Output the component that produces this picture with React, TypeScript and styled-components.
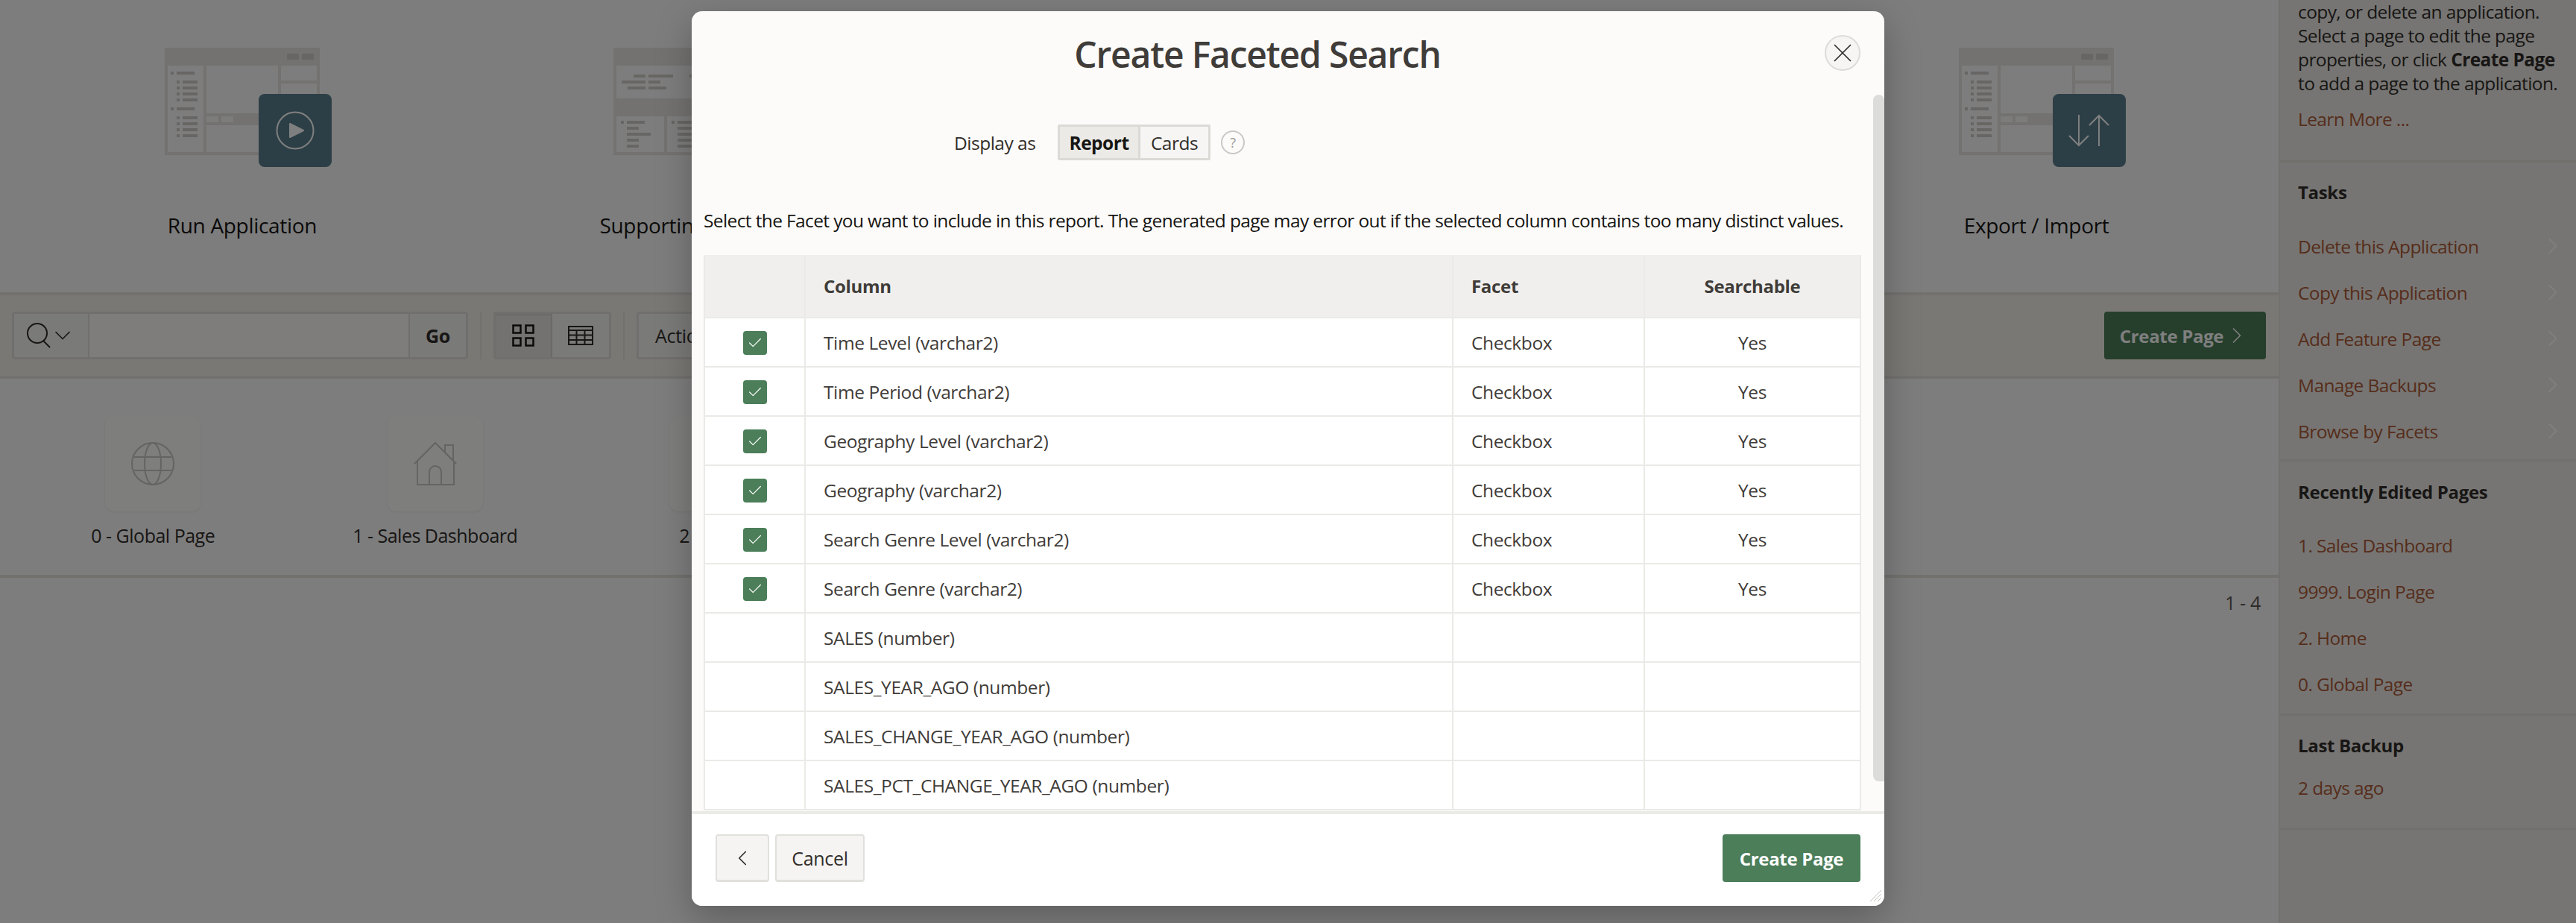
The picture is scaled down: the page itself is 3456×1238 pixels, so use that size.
import React from "react";
import styled, { createGlobalStyle } from "styled-components";
import { ChevronRight, ChevronLeft, ChevronDown, X, Check } from "lucide-react";

const FONT = `"Open Sans", "Noto Sans", sans-serif`;

const GlobalStyle = createGlobalStyle`
  html, body {
    margin: 0;
    height: 100%;
    overflow: hidden;
    background: #fbfbfb;
  }
  body {
    font-family: ${FONT};
    letter-spacing: -0.32px;
    color: #161513;
  }
  * { box-sizing: border-box; }
`;

const Page = styled.div`
  position: relative;
  display: flex;
  width: 3456px;
  height: 1238px;
  overflow: hidden;
  background: #fbfbfb;
`;

const Main = styled.main`
  width: 3057px;
  flex: none;
`;

const Hero = styled.section`
  display: grid;
  grid-template-columns: repeat(5, 1fr);
  height: 396px;
  padding: 64px 24px 0;
  border-bottom: 4px solid #e4e2dd;
`;

const HeroTile = styled.div`
  display: flex;
  flex-direction: column;
  align-items: center;
`;

const HeroArt = styled.div`
  position: relative;
  width: 208px;
  height: 160px;
`;

const HeroBadge = styled.div`
  position: absolute;
  left: 126px;
  top: 62px;
  width: 98px;
  height: 98px;
  display: flex;
  align-items: center;
  justify-content: center;
  border-radius: 8px;
  background: #5a7f8d;
`;

const HeroLabel = styled.div`
  margin-top: 58px;
  font-size: 28px;
  line-height: 40px;
  white-space: nowrap;
`;

const Toolbar = styled.div`
  display: flex;
  align-items: center;
  gap: 16px;
  height: 112px;
  padding: 0 16px;
  background: #f2f0ea;
  border-bottom: 4px solid #e4e2dd;
`;

const Group = styled.div`
  display: flex;
  height: 64px;
  border: 3px solid #e0deda;
  border-radius: 4px;
  background: #f5f4f0;
`;

const SearchMenu = styled.div`
  width: 101px;
  display: flex;
  align-items: center;
  padding-left: 17px;
  border-right: 2px solid #e0deda;
`;

const SearchInput = styled.div`
  width: 428px;
  background: #fcfbf9;
`;

const GoButton = styled.div`
  width: 77px;
  display: flex;
  align-items: center;
  justify-content: center;
  border-left: 2px solid #e0deda;
  font-size: 25px;
  font-weight: 700;
  color: #312d2a;
`;

const Divider = styled.span`
  width: 2px;
  height: 64px;
  background: #e4e2dd;
`;

const ViewToggle = styled.div<{ $active?: boolean }>`
  width: 76px;
  display: flex;
  align-items: center;
  justify-content: center;
  background: ${(p) => (p.$active ? "#e7e5e1" : "transparent")};
  border-right: ${(p) => (p.$active ? "2px solid #d5d3cf" : "none")};
  box-shadow: ${(p) => (p.$active ? "inset 0 2px 2px #d5d3cf" : "none")};
`;

const ActionsBtn = styled.div`
  display: flex;
  align-items: center;
  height: 64px;
  padding: 0 22px;
  font-size: 25px;
  color: #312d2a;
  border: 3px solid #e0deda;
  border-radius: 4px;
  background: #f5f4f0;
`;

const CreateBtn = styled.div`
  margin-left: auto;
  margin-right: 1px;
  width: 217px;
  height: 64px;
  display: flex;
  align-items: center;
  justify-content: center;
  border-radius: 4px;
  background: #4c7e59;
  color: #fff;
  font-size: 24px;
  font-weight: 700;
`;

const Gallery = styled.div`
  display: flex;
  height: 267px;
  padding: 50px 16px 0;
  border-bottom: 4px solid #e4e2dd;
`;

const GalleryItem = styled.div`
  width: 378.5px;
  display: flex;
  flex-direction: column;
  align-items: center;
`;

const PageCard = styled.div`
  width: 128px;
  height: 128px;
  display: flex;
  align-items: center;
  justify-content: center;
  border-radius: 12px;
  background: #fdfcfa;
  box-shadow: 0 1px 3px rgba(0, 0, 0, 0.08);
`;

const PageLabel = styled.div`
  margin-top: 14px;
  font-size: 25px;
  letter-spacing: -0.5px;
  line-height: 36px;
  color: #312d2a;
`;

const Pager = styled.div`
  padding: 16px 24px 0 0;
  text-align: right;
  font-size: 25px;
  line-height: 34px;
  color: #5b5652;
`;

const Sidebar = styled.aside`
  width: 399px;
  flex: none;
  background: #edebe6;
  border-left: 2px solid #e5e3de;
  font-size: 24.5px;
  letter-spacing: -0.6px;
`;

const SideSection = styled.section<{ $h: number }>`
  height: ${(p) => p.$h}px;
  padding: 0 24px;
  border-bottom: 3px solid #e2e0db;
  overflow: hidden;
`;

const SideCopy = styled.p`
  margin: 0;
  line-height: 32px;
  color: #312d2a;
  white-space: nowrap;
`;

const SideTitle = styled.h3<{ $top: number; $bottom: number }>`
  margin: ${(p) => p.$top}px 0 ${(p) => p.$bottom}px;
  font-size: 24px;
  letter-spacing: -0.32px;
  line-height: 34px;
  font-weight: 700;
  color: #312d2a;
`;

const SideLink = styled.a`
  display: flex;
  align-items: center;
  justify-content: space-between;
  height: 34px;
  margin-bottom: 28px;
  color: #ac5a38;
`;

const LearnMore = styled(SideLink)`
  margin-top: 14px;
`;

const SideChevron = styled(ChevronRight)`
  flex: none;
  margin-right: -11px;
  color: #fff;
`;

const Scrim = styled.div`
  position: absolute;
  inset: 0;
  background: rgba(0, 0, 0, 0.5);
`;

const Modal = styled.div`
  position: absolute;
  left: 928px;
  top: 15px;
  width: 1600px;
  height: 1200px;
  display: flex;
  flex-direction: column;
  border-radius: 14px;
  overflow: hidden;
  background: #fcfbf9;
  box-shadow: 0 16px 48px rgba(0, 0, 0, 0.25);
`;

const ModalHeader = styled.header`
  position: relative;
  flex: none;
  height: 112px;
  padding-top: 4px;
  display: flex;
  align-items: center;
  justify-content: center;
`;

const ModalTitle = styled.h1`
  margin: 0;
  font-size: 48px;
  font-weight: 600;
  letter-spacing: -1.2px;
  line-height: 64px;
  color: #3f3c39;
  transform: translateX(-41px);
`;

const CloseBtn = styled.div`
  position: absolute;
  right: 32px;
  top: 32px;
  width: 48px;
  height: 48px;
  display: flex;
  align-items: center;
  justify-content: center;
  border-radius: 50%;
  border: 2px solid #dddcd9;
  background: #f6f5f3;
  color: #312d2a;
`;

const ModalBody = styled.div`
  position: relative;
  flex: 1;
  min-height: 0;
  padding: 0 32px 0 16px;
  overflow: hidden;
`;

const Scrollbar = styled.div`
  position: absolute;
  right: 0;
  top: 0;
  width: 15px;
  height: 921px;
  border-radius: 8px 8px 0 8px;
  background: #dcdcda;
`;

const DisplayRow = styled.div`
  display: flex;
  align-items: center;
  height: 48px;
  margin: 40px 0 0 336px;
`;

const DisplayLabel = styled.label`
  width: 139px;
  font-size: 24.5px;
  letter-spacing: -0.5px;
  color: #312d2a;
`;

const Segment = styled.div`
  display: flex;
  height: 48px;
  border: 3px solid #dbdad7;
  border-radius: 2px;
`;

const SegmentItem = styled.div<{ $on?: boolean }>`
  display: flex;
  align-items: center;
  justify-content: center;
  width: ${(p) => (p.$on ? 108 : 91)}px;
  font-size: 24.5px;
  letter-spacing: -0.5px;
  font-weight: ${(p) => (p.$on ? 700 : 400)};
  color: ${(p) => (p.$on ? "#161513" : "#312d2a")};
  background: ${(p) => (p.$on ? "#ebeae7" : "#f6f5f3")};
  border-right: ${(p) => (p.$on ? "3px solid #dbdad7" : "none")};
`;

const HelpIcon = styled.div`
  width: 32px;
  height: 32px;
  margin-left: 14px;
  display: flex;
  align-items: center;
  justify-content: center;
  border-radius: 50%;
  border: 2px solid #c9c8c5;
  font-size: 18px;
  color: #9b9a97;
`;

const Instruction = styled.p`
  margin: 64px 0 29px;
  font-size: 24.5px;
  letter-spacing: -0.62px;
  line-height: 34px;
  white-space: nowrap;
  color: #161513;
`;

const Table = styled.table`
  width: 1551px;
  table-layout: fixed;
  border-collapse: collapse;
  background: #fff;
`;

const Th = styled.th<{ $center?: boolean }>`
  height: 84px;
  padding: 0 24px;
  background: #f0efed;
  border: 2px solid #eaeae7;
  border-top: 0;
  text-align: ${(p) => (p.$center ? "center" : "left")};
  font-size: 24px;
  font-weight: 700;
  color: #3f3c39;
`;

const Td = styled.td<{ $center?: boolean }>`
  height: 66px;
  padding: 0 24px;
  border: 2px solid #eaeae7;
  text-align: ${(p) => (p.$center ? "center" : "left")};
  font-size: 24.5px;
  letter-spacing: -0.4px;
  color: #3f3c39;
  white-space: nowrap;
`;

const CheckBox = styled.span`
  display: inline-flex;
  vertical-align: middle;
  align-items: center;
  justify-content: center;
  width: 32px;
  height: 32px;
  margin-top: -3px;
  border-radius: 4px;
  background: #4b7e59;
  color: #fff;
`;

const ModalFooter = styled.footer`
  flex: none;
  height: 127px;
  display: flex;
  align-items: flex-start;
  gap: 8px;
  padding: 27px 32px 0;
  background: #fff;
  border-top: 4px solid #eaeae7;
`;

const FootButton = styled.div<{ $w: number }>`
  width: ${(p) => p.$w}px;
  height: 64px;
  display: flex;
  align-items: center;
  justify-content: center;
  border: 2px solid #e1e0dd;
  border-bottom-width: 3px;
  border-radius: 4px;
  background: #f5f4f2;
  font-size: 25px;
  color: #312d2a;
`;

const PrimaryButton = styled.div`
  margin-left: auto;
  width: 185px;
  height: 64px;
  display: flex;
  align-items: center;
  justify-content: center;
  border-radius: 4px;
  background: #4b7e59;
  color: #fff;
  font-size: 24px;
  font-weight: 700;
`;

const Grip = styled.svg`
  position: absolute;
  right: 4px;
  bottom: 6px;
`;

const Wireframe = ({ kind }: { kind: "app" | "form" }) => {
  const c = "#e6e4e0";
  const d = "#cfcdc9";
  const bars = (x: number, ys: number[], w: number, bullet = true) =>
    ys.map((y) => (
      <g key={`${x}-${y}`} fill={d}>
        {bullet && <rect x={x} y={y} width="4" height="4" />}
        <rect x={x + 8} y={y} width={w} height="4" />
      </g>
    ));
  return (
    <svg width="208" height="144" viewBox="0 0 208 144">
      <rect x="2" y="2" width="204" height="140" fill="none" stroke={c} strokeWidth="4" />
      <rect x="4" y="4" width="200" height="16" fill={c} />
      <rect x="0" y="20" width="208" height="4" fill={c} />
      {kind === "app" ? (
        <>
          <rect x="164" y="8" width="16" height="8" rx="1" fill={d} />
          <rect x="184" y="8" width="16" height="8" rx="1" fill={d} />
          <rect x="52" y="24" width="4" height="116" fill={c} />
          <rect x="152" y="24" width="4" height="64" fill={c} />
          <rect x="152" y="44" width="56" height="4" fill={c} />
          <rect x="56" y="88" width="100" height="16" fill={c} />
          <rect x="56" y="92" width="16" height="8" fill="#f9f8f5" />
          <rect x="76" y="92" width="16" height="8" fill="#f9f8f5" />
          {bars(8, [32, 80], 24)}
          {bars(16, [44, 52, 60, 68, 92, 100, 108, 116], 20)}
        </>
      ) : (
        <>
          <rect x="4" y="68" width="200" height="24" fill={c} />
          <rect x="68" y="92" width="4" height="48" fill={c} />
          <rect x="136" y="92" width="4" height="48" fill={c} />
          <g fill={d}>
            <rect x="27" y="36" width="16" height="4" />
            <rect x="47" y="36" width="33" height="4" />
            <rect x="102" y="36" width="16" height="4" />
            <rect x="11" y="44" width="32" height="4" />
            <rect x="47" y="44" width="16" height="4" />
            <rect x="19" y="52" width="24" height="4" />
            <rect x="47" y="52" width="24" height="4" />
          </g>
          {bars(10, [98], 24)}
          {bars(10, [106, 122], 16, false)}
          {bars(10, [114], 32, false)}
          {bars(10, [130], 16, false)}
          {bars(78, [98], 24)}
          {bars(78, [106, 114, 122, 130], 20, false)}
        </>
      )}
    </svg>
  );
};

const GlobeIcon = () => (
  <svg width="60" height="60" viewBox="0 0 60 60" fill="none" stroke="#c9c8c5" strokeWidth="2">
    <circle cx="30" cy="30" r="28" />
    <ellipse cx="30" cy="30" rx="11" ry="28" />
    <path d="M5 21h50M5 39h50" />
  </svg>
);

const HouseIcon = () => (
  <svg width="60" height="60" viewBox="0 0 60 60" fill="none" stroke="#c9c8c5" strokeWidth="2">
    <path d="M2 30 L30 2 L58 30" />
    <path d="M6 26 V58 H55 V26" />
    <path d="M22 58 V41 a8 8 0 0 1 16 0 V58" />
    <path d="M43 15 V5 H54 V26" />
  </svg>
);

const GridIcon = () => (
  <svg width="30" height="30" viewBox="0 0 30 30" fill="none" stroke="#161513" strokeWidth="2.5">
    <rect x="1.5" y="1.5" width="10" height="10" />
    <rect x="18.5" y="1.5" width="10" height="10" />
    <rect x="1.5" y="18.5" width="10" height="10" />
    <rect x="18.5" y="18.5" width="10" height="10" />
  </svg>
);

const TableIcon = () => (
  <svg width="34" height="26" viewBox="0 0 34 26" fill="none" stroke="#312d2a" strokeWidth="2">
    <rect x="1" y="1" width="32" height="24" />
    <path d="M1 6h32M1 12.500h32M1 19h32M11.500 6v19M22.500 6v19" />
  </svg>
);

const SearchIcon = () => (
  <svg width="34" height="34" viewBox="0 0 34 34" fill="none" stroke="#312d2a" strokeWidth="2">
    <circle cx="14" cy="14" r="13" />
    <path d="M22 24 L31 33" />
  </svg>
);

const PlayIcon = () => (
  <svg width="52" height="52" viewBox="0 0 52 52" fill="none">
    <circle cx="26" cy="26" r="24.500" stroke="#fff" strokeWidth="2" />
    <path d="M19 17 L37 26 L19 35 Z" fill="#fff" stroke="#fff" strokeWidth="2" strokeLinejoin="round" />
  </svg>
);

const TransferIcon = () => (
  <svg width="56" height="44" viewBox="0 0 56 44" fill="none" stroke="#fff" strokeWidth="2">
    <path d="M14 1 V42 M1 29 L14 42 L27 29" />
    <path d="M41 43 V2 M28 15 L41 2 L54 15" />
  </svg>
);

const rows: [string, boolean][] = [
  ["Time Level (varchar2)", true],
  ["Time Period (varchar2)", true],
  ["Geography Level (varchar2)", true],
  ["Geography (varchar2)", true],
  ["Search Genre Level (varchar2)", true],
  ["Search Genre (varchar2)", true],
  ["SALES (number)", false],
  ["SALES_YEAR_AGO (number)", false],
  ["SALES_CHANGE_YEAR_AGO (number)", false],
  ["SALES_PCT_CHANGE_YEAR_AGO (number)", false],
];

const tasks = ["Delete this Application", "Copy this Application", "Add Feature Page", "Manage Backups", "Browse by Facets"];
const recent = ["1. Sales Dashboard", "9999. Login Page", "2. Home", "0. Global Page"];

const App = () => {
  return (
    <Page>
      <GlobalStyle />
      <Main>
        <Hero>
          <HeroTile>
            <HeroArt>
              <Wireframe kind="app" />
              <HeroBadge><PlayIcon /></HeroBadge>
            </HeroArt>
            <HeroLabel>Run Application</HeroLabel>
          </HeroTile>
          <HeroTile>
            <HeroArt>
              <Wireframe kind="form" />
            </HeroArt>
            <HeroLabel>Supporting Objects</HeroLabel>
          </HeroTile>
          <HeroTile />
          <HeroTile />
          <HeroTile>
            <HeroArt>
              <Wireframe kind="app" />
              <HeroBadge><TransferIcon /></HeroBadge>
            </HeroArt>
            <HeroLabel>Export / Import</HeroLabel>
          </HeroTile>
        </Hero>
        <Toolbar>
          <Group>
            <SearchMenu>
              <SearchIcon />
              <ChevronDown size={36} strokeWidth={1.1} color="#312d2a" style={{ marginLeft: -4 }} />
            </SearchMenu>
            <SearchInput />
            <GoButton>Go</GoButton>
          </Group>
          <Divider />
          <Group>
            <ViewToggle $active><GridIcon /></ViewToggle>
            <ViewToggle><TableIcon /></ViewToggle>
          </Group>
          <Divider />
          <ActionsBtn>Actions</ActionsBtn>
          <CreateBtn>
            Create Page
            <ChevronRight size={36} strokeWidth={1.1} />
          </CreateBtn>
        </Toolbar>
        <Gallery>
          <GalleryItem>
            <PageCard><GlobeIcon /></PageCard>
            <PageLabel>0 - Global Page</PageLabel>
          </GalleryItem>
          <GalleryItem>
            <PageCard><HouseIcon /></PageCard>
            <PageLabel>1 - Sales Dashboard</PageLabel>
          </GalleryItem>
          <GalleryItem>
            <PageCard><HouseIcon /></PageCard>
            <PageLabel>2 - Home</PageLabel>
          </GalleryItem>
        </Gallery>
        <Pager>1 - 4</Pager>
      </Main>
      <Sidebar>
        <SideSection $h={218}>
          <SideCopy>copy, or delete an application.</SideCopy>
          <SideCopy>Select a page to edit the page</SideCopy>
          <SideCopy>properties, or click <b>Create Page</b></SideCopy>
          <SideCopy>to add a page to the application.</SideCopy>
          <LearnMore>Learn More ...</LearnMore>
        </SideSection>
        <SideSection $h={401}>
          <SideTitle $top={23} $bottom={38}>Tasks</SideTitle>
          {tasks.map((t) => (
            <SideLink key={t}>
              {t}
              <SideChevron size={36} strokeWidth={1.3} />
            </SideLink>
          ))}
        </SideSection>
        <SideSection $h={341}>
          <SideTitle $top={24} $bottom={37}>Recently Edited Pages</SideTitle>
          {recent.map((t) => (
            <SideLink key={t}>{t}</SideLink>
          ))}
        </SideSection>
        <SideSection $h={153}>
          <SideTitle $top={23} $bottom={22}>Last Backup</SideTitle>
          <SideLink>2 days ago</SideLink>
        </SideSection>
      </Sidebar>
      <Scrim />
      <Modal>
        <ModalHeader>
          <ModalTitle>Create Faceted Search</ModalTitle>
          <CloseBtn><X size={42} strokeWidth={1} /></CloseBtn>
        </ModalHeader>
        <ModalBody>
          <Scrollbar />
          <DisplayRow>
            <DisplayLabel>Display as</DisplayLabel>
            <Segment>
              <SegmentItem $on>Report</SegmentItem>
              <SegmentItem>Cards</SegmentItem>
            </Segment>
            <HelpIcon>?</HelpIcon>
          </DisplayRow>
          <Instruction>
            Select the Facet you want to include in this report. The generated page may error out if the selected column contains too many distinct values.
          </Instruction>
          <Table>
            <colgroup>
              <col style={{ width: 135 }} />
              <col style={{ width: 869 }} />
              <col style={{ width: 257 }} />
              <col style={{ width: 290 }} />
            </colgroup>
            <thead>
              <tr>
                <Th />
                <Th>Column</Th>
                <Th>Facet</Th>
                <Th $center>Searchable</Th>
              </tr>
            </thead>
            <tbody>
              {rows.map(([name, on]) => (
                <tr key={name}>
                  <Td $center>
                    {on && <CheckBox><Check size={22} strokeWidth={1.3} /></CheckBox>}
                  </Td>
                  <Td>{name}</Td>
                  <Td>{on ? "Checkbox" : ""}</Td>
                  <Td $center>{on ? "Yes" : ""}</Td>
                </tr>
              ))}
            </tbody>
          </Table>
        </ModalBody>
        <ModalFooter>
          <FootButton $w={72}><ChevronLeft size={34} strokeWidth={1.2} /></FootButton>
          <FootButton $w={120}>Cancel</FootButton>
          <PrimaryButton>Create Page</PrimaryButton>
        </ModalFooter>
        <Grip width="16" height="16" viewBox="0 0 16 16" stroke="#c4c3c0" strokeWidth="1">
          <path d="M1 16 L16 1M6 16 L16 6M11 16 L16 11" />
        </Grip>
      </Modal>
    </Page>
  );
};

export default App;
